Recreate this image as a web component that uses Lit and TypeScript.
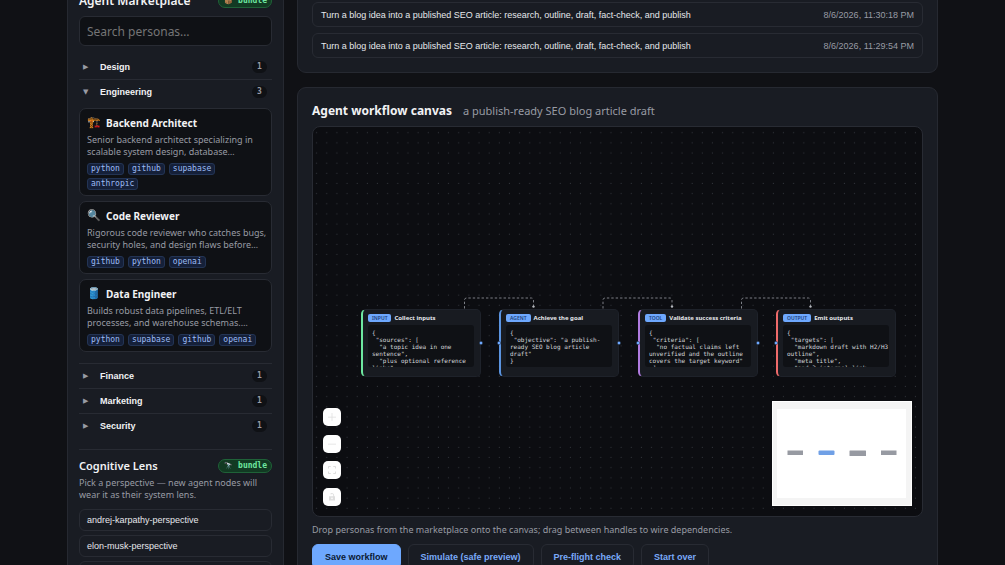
import { LitElement, html, css, svg, nothing } from "lit";
import { customElement, property, state } from "lit/decorators.js";
import { classMap } from "lit/directives/class-map.js";
import { styleMap } from "lit/directives/style-map.js";

interface Persona {
  icon: string;
  name: string;
  summary: string;
  tools: string[];
}

interface Group {
  name: string;
  count: number;
  personas: Persona[];
}

interface FlowNode {
  kind: "input" | "agent" | "tool" | "output";
  title: string;
  body: string;
  x: number;
  y: number;
}

const GROUPS: Group[] = [
  { name: "Design", count: 1, personas: [] },
  {
    name: "Engineering",
    count: 3,
    personas: [
      {
        icon: "🏗️",
        name: "Backend Architect",
        summary: "Senior backend architect specializing in scalable system design, database…",
        tools: ["python", "github", "supabase", "anthropic"],
      },
      {
        icon: "🔍",
        name: "Code Reviewer",
        summary: "Rigorous code reviewer who catches bugs, security holes, and design flaws before…",
        tools: ["github", "python", "openai"],
      },
      {
        icon: "🛢️",
        name: "Data Engineer",
        summary: "Builds robust data pipelines, ETL/ELT processes, and warehouse schemas.…",
        tools: ["python", "supabase", "github", "openai"],
      },
    ],
  },
  { name: "Finance", count: 1, personas: [] },
  { name: "Marketing", count: 1, personas: [] },
  { name: "Security", count: 1, personas: [] },
];

const LENSES = ["andrej-karpathy-perspective", "elon-musk-perspective", "feynman-perspective"];

const GOAL = "Turn a blog idea into a published SEO article: research, outline, draft, fact-check, and publish";
const RUNS = [
  { goal: GOAL, time: "8/6/2026, 11:30:18 PM" },
  { goal: GOAL, time: "8/6/2026, 11:29:54 PM" },
];

const NODES: FlowNode[] = [
  {
    kind: "input",
    title: "Collect inputs",
    body: '{\n "sources": [\n  "a topic idea in one sentence",\n  "plus optional reference links"\n ]\n}',
    x: 48,
    y: 182,
  },
  {
    kind: "agent",
    title: "Achieve the goal",
    body: '{\n "objective": "a publish-ready SEO blog article draft"\n}',
    x: 186,
    y: 182,
  },
  {
    kind: "tool",
    title: "Validate success criteria",
    body: '{\n "criteria": [\n  "no factual claims left unverified and the outline covers the target keyword"\n ]\n}',
    x: 325,
    y: 182,
  },
  {
    kind: "output",
    title: "Emit outputs",
    body: '{\n "targets": [\n  "markdown draft with H2/H3 outline",\n  "meta title",\n  "and 3 internal link suggestions"\n ]\n}',
    x: 463,
    y: 182,
  },
];

@customElement("persona-card")
export class PersonaCard extends LitElement {
  @property({ attribute: false }) persona!: Persona;

  static styles = css`
    :host {
      display: block;
    }
    .card {
      padding: 6px 2px 5px 7px;
      border: 1px solid #282b33;
      border-radius: 7px;
      background: #0f1115;
    }
    .head {
      display: flex;
      align-items: center;
      gap: 6px;
      height: 15px;
      margin: 0 0 4px;
      font-size: 10px;
      font-weight: 700;
      color: #f1f2f4;
    }
    .icon {
      width: 13px;
      font-family: "Noto Color Emoji", "Noto Sans", sans-serif;
      font-size: 11px;
      font-weight: 400;
      line-height: 15px;
    }
    .summary {
      margin: 0 0 5px;
      font-size: 9px;
      line-height: 12px;
      color: #989ba4;
    }
    .tools {
      display: flex;
      flex-wrap: wrap;
      gap: 3px 4px;
      margin: 0;
      padding: 0;
      list-style: none;
    }
    .tool {
      padding: 0 3px;
      border: 1px solid #233454;
      border-radius: 3px;
      background: #152039;
      font-family: "DejaVu Sans Mono", monospace;
      font-size: 8px;
      line-height: 10px;
      color: #9dbcf5;
    }
  `;

  render() {
    const p = this.persona;
    return html`
      <article class="card">
        <h3 class="head"><span class="icon">${p.icon}</span>${p.name}</h3>
        <p class="summary">${p.summary}</p>
        <ul class="tools">
          ${p.tools.map((t) => html`<li class="tool">${t}</li>`)}
        </ul>
      </article>
    `;
  }
}

@customElement("workflow-canvas")
export class WorkflowCanvas extends LitElement {
  static styles = css`
    :host {
      display: block;
    }
    .canvas {
      position: relative;
      height: 389px;
      border: 1px solid #282b33;
      border-radius: 8px;
      background: #0c0d11;
      overflow: hidden;
    }
    .backdrop {
      display: block;
      width: 100%;
      height: 100%;
    }
    .node {
      position: absolute;
      box-sizing: border-box;
      width: 120px;
      height: 68px;
      padding: 4px 6px 0 5px;
      border: 1px solid #1e222a;
      border-left: 2px solid #6ea8fe;
      border-radius: 5px;
      background: #181b21;
      color: #e6e8ec;
    }
    .node.input {
      border-left-color: #6ee7a0;
    }
    .node.agent {
      border-left-color: #5b94e0;
    }
    .node.tool {
      border-left-color: #b07be0;
    }
    .node.output {
      border-left-color: #ee6a6a;
    }
    .title {
      display: flex;
      align-items: center;
      gap: 3px;
      margin: 0 0 3px;
      font-size: 6px;
      line-height: 8px;
      font-weight: 700;
      white-space: nowrap;
    }
    .kind {
      padding: 0 4px;
      border-radius: 2px;
      background: #6ea8fe;
      color: #1d3f78;
      font-size: 5px;
      font-weight: 600;
    }
    .body {
      box-sizing: border-box;
      height: 42px;
      margin: 0;
      padding: 4px 0 0 4px;
      border-radius: 3px;
      background: #0f1115;
      overflow: hidden;
      font-family: "DejaVu Sans Mono", monospace;
      font-size: 6px;
      line-height: 7px;
      color: #d5d7db;
      white-space: pre-wrap;
    }
    .handles {
      position: absolute;
      left: 0;
      top: 212px;
    }
    .controls {
      position: absolute;
      left: 10px;
      bottom: 10px;
      display: flex;
      flex-direction: column;
      justify-content: space-between;
      height: 98px;
    }
    .control {
      display: grid;
      place-items: center;
      width: 18px;
      height: 18px;
      padding: 0;
      border: 0;
      border-radius: 5px;
      background: #fefefe;
    }
    .control svg {
      width: 8px;
      height: 8px;
      fill: #dedede;
    }
    .minimap {
      position: absolute;
      right: 10px;
      bottom: 10px;
      width: 140px;
      height: 105px;
      background: #fff;
    }
  `;

  private edge(x: number) {
    return svg`
      <path d="M${x} 181.5V173a2 2 0 0 1 2-2h65a2 2 0 0 1 2 2v7" fill="none"
        stroke="#7c7f86" stroke-width="1" stroke-dasharray="2.4 2"></path>
      <circle cx=${x + 69} cy="179.6" r="1.2" fill="#b5b8be"></circle>
    `;
  }

  render() {
    return html`
      <div class="canvas">
        <svg class="backdrop" aria-hidden="true">
          <defs>
            <pattern id="dots" x="-1.4" y="0.7" width="10.15" height="10.15" patternUnits="userSpaceOnUse">
              <circle cx="5" cy="5" r="0.55" fill="#33363d"></circle>
            </pattern>
          </defs>
          <rect width="100%" height="100%" fill="url(#dots)"></rect>
          ${[151.5, 290, 428.5].map((x) => this.edge(x))}
        </svg>
        ${NODES.map(
          (n) => html`
            <section
              class=${classMap({ node: true, [n.kind]: true })}
              style=${styleMap({ left: `${n.x}px`, top: `${n.y}px` })}
            >
              <h3 class="title"><span class="kind">${n.kind.toUpperCase()}</span>${n.title}</h3>
              <pre class="body">${n.body}</pre>
            </section>
          `,
        )}
        <svg class="handles" aria-hidden="true" width="560" height="8">
          ${[168, 186, 306, 325, 445, 463].map(
            (x) => svg`<circle cx=${x} cy="4" r="1.7" fill="#6ea8fe" stroke="#0f1115" stroke-width="0.4"></circle>`,
          )}
        </svg>
        <div class="controls">
          <button class="control" aria-label="Zoom in">
            <svg viewBox="0 0 32 32"><path d="M14.500 0h3v14.500H32v3H17.500V32h-3V17.500H0v-3h14.500z"></path></svg>
          </button>
          <button class="control" aria-label="Zoom out">
            <svg viewBox="0 0 32 32"><path d="M0 14.500h32v3H0z"></path></svg>
          </button>
          <button class="control" aria-label="Fit view">
            <svg viewBox="0 0 32 32">
              <path d="M0 10V3a3 3 0 0 1 3-3h8v4H4v6zM21 0h8a3 3 0 0 1 3 3v7h-4V4h-7zM0 22h4v6h7v4H3a3 3 0 0 1-3-3zM28 22h4v7a3 3 0 0 1-3 3h-8v-4h7z"></path>
            </svg>
          </button>
          <button class="control" aria-label="Toggle interactivity">
            <svg viewBox="0 0 32 32">
              <path fill-rule="evenodd" d="M4 13h17V9a5 5 0 0 0-9-3L9 4a8.500 8.500 0 0 1 15.500 5v4H28v17H4zM16 18a3 3 0 1 0 .01 0z"></path>
            </svg>
          </button>
        </div>
        <svg class="minimap" viewBox="0 0 140 105" role="img" aria-label="Mini map">
          <rect x="1" y="1" width="138" height="103" fill="#f4f4f4"></rect>
          <rect x="5" y="8" width="129" height="89" fill="#fff"></rect>
          <rect x="15.500" y="49.500" width="15.500" height="4.500" fill="#979aa2"></rect>
          <rect x="46.500" y="49.500" width="16" height="4.500" rx="1" fill="#70a0e6"></rect>
          <rect x="77.500" y="49.500" width="16.500" height="5.500" rx="0.5" fill="#979aa2"></rect>
          <rect x="109" y="49.500" width="15.500" height="4.500" fill="#979aa2"></rect>
        </svg>
      </div>
    `;
  }
}

@customElement("app-root")
export class AppRoot extends LitElement {
  @state() private open = new Set(["Engineering"]);

  static styles = css`
    :host {
      display: block;
      height: 100vh;
      overflow: hidden;
      background: #101115;
      color: #e6e8ec;
      font-family: "Noto Sans", sans-serif;
    }
    .shell {
      display: grid;
      grid-template-columns: 217px minmax(0, 1fr);
      gap: 13px;
      margin: -25px 67px 0;
    }
    .sidebar {
      padding: 16px 11px;
      border: 1px solid #262931;
      border-radius: 9px;
      background: #191c23;
    }
    .section-head {
      display: flex;
      align-items: center;
      justify-content: space-between;
      height: 17px;
    }
    .section-title {
      margin: 0;
      font-size: 12px;
      line-height: 17px;
      font-weight: 600;
      color: #f1f2f4;
    }
    .lens .section-title {
      font-size: 11px;
    }
    .bundle {
      display: flex;
      align-items: center;
      gap: 5px;
      height: 12px;
      padding: 0 4px 0 5px;
      border: 1px solid #1f6238;
      border-radius: 8px;
      background: #123a23;
      font-family: "DejaVu Sans Mono", monospace;
      font-size: 8px;
      font-weight: 700;
      color: #6ee7a0;
    }
    .bundle-icon {
      font-family: "Noto Color Emoji", sans-serif;
      font-size: 7px;
      font-weight: 400;
    }
    .search {
      box-sizing: border-box;
      display: block;
      width: 100%;
      height: 30px;
      margin: 7px 0 9px;
      padding: 0 7px;
      border: 1px solid #282b33;
      border-radius: 6px;
      background: #0f1115;
      color: #e6e8ec;
      font-family: inherit;
      font-size: 12px;
    }
    .search::placeholder {
      color: #757575;
    }
    .group + .group {
      border-top: 1px solid #282b33;
    }
    .group-toggle {
      display: flex;
      align-items: center;
      width: 100%;
      height: 24px;
      padding: 0 5px 0 4px;
      border: 0;
      background: none;
      color: #f1f2f4;
      font-family: "Liberation Sans", sans-serif;
      font-size: 9px;
      font-weight: 700;
      text-align: left;
    }
    .caret {
      width: 17px;
      font-family: "DejaVu Sans", sans-serif;
      font-size: 7px;
      font-weight: 400;
      color: #989ba4;
    }
    .group-name {
      flex: 1;
    }
    .count {
      width: 15px;
      border-radius: 6px;
      background: #0f1115;
      font-family: "DejaVu Sans Mono", monospace;
      font-size: 8px;
      line-height: 12px;
      color: #989ba4;
      text-align: center;
    }
    .personas {
      display: grid;
      gap: 5px;
      padding: 4px 0 11px;
    }
    .lens {
      margin-top: 11px;
      padding-top: 7px;
      border-top: 1px solid #282b33;
    }
    .hint {
      margin: 0;
      font-size: 9px;
      line-height: 12px;
      color: #989ba4;
    }
    .lens .hint {
      margin: 3px 0 8px;
    }
    .lens-list {
      display: grid;
      gap: 4px;
    }
    .lens-item {
      height: 22px;
      padding: 0 7px;
      border: 1px solid #282b33;
      border-radius: 6px;
      background: #191c23;
      color: #e6e8ec;
      font-family: "Liberation Sans", sans-serif;
      font-size: 9px;
      text-align: left;
    }
    .main {
      display: flex;
      flex-direction: column;
      gap: 14px;
    }
    .panel {
      padding: 14px;
      border: 1px solid #262931;
      border-radius: 9px;
      background: #191c23;
    }
    .history {
      display: grid;
      gap: 6px;
      padding-top: 26px;
    }
    .run {
      display: flex;
      align-items: center;
      justify-content: space-between;
      height: 25px;
      padding: 0 8px;
      border: 1px solid #282b33;
      border-radius: 6px;
      background: #191c23;
      color: #e6e8ec;
      font-family: "Liberation Sans", sans-serif;
      font-size: 9px;
    }
    .run-time {
      color: #989ba4;
    }
    .canvas-head {
      display: flex;
      align-items: baseline;
      gap: 11px;
      margin-bottom: 7px;
    }
    .canvas-title {
      margin: 0;
      font-size: 12px;
      line-height: 17px;
      font-weight: 700;
      color: #f1f2f4;
    }
    .canvas-goal {
      font-size: 11px;
      line-height: 17px;
      color: #989ba4;
    }
    .panel .hint {
      margin: 7px 0 8px;
    }
    .actions {
      display: flex;
      gap: 7px;
    }
    .action {
      height: 25px;
      padding: 0 12px;
      border: 1px solid #282b33;
      border-radius: 6px;
      background: #191c23;
      color: #7aaaf8;
      font-family: "Liberation Sans", sans-serif;
      font-size: 9px;
      font-weight: 700;
    }
    .action.primary {
      border-color: #6ea8fe;
      background: #6ea8fe;
      color: #0b1a33;
    }
  `;

  private toggle(name: string) {
    const next = new Set(this.open);
    if (!next.delete(name)) next.add(name);
    this.open = next;
  }

  private renderGroup(g: Group) {
    const open = this.open.has(g.name);
    return html`
      <div class="group">
        <button class="group-toggle" aria-expanded=${open} @click=${() => this.toggle(g.name)}>
          <span class="caret">${open ? "▼" : "▶"}</span>
          <span class="group-name">${g.name}</span>
          <span class="count">${g.count}</span>
        </button>
        ${open && g.personas.length
          ? html`<div class="personas">
              ${g.personas.map((p) => html`<persona-card .persona=${p}></persona-card>`)}
            </div>`
          : nothing}
      </div>
    `;
  }

  render() {
    return html`
      <div class="shell">
        <aside class="sidebar">
          <div class="section-head">
            <h2 class="section-title">Agent Marketplace</h2>
            <span class="bundle"><span class="bundle-icon">📦</span>bundle</span>
          </div>
          <input class="search" type="search" placeholder="Search personas…" aria-label="Search personas" />
          ${GROUPS.map((g) => this.renderGroup(g))}
          <section class="lens">
            <div class="section-head">
              <h2 class="section-title">Cognitive Lens</h2>
              <span class="bundle"><span class="bundle-icon">🔭</span>bundle</span>
            </div>
            <p class="hint">Pick a perspective — new agent nodes will wear it as their system lens.</p>
            <div class="lens-list">
              ${LENSES.map((l) => html`<button class="lens-item">${l}</button>`)}
            </div>
          </section>
        </aside>
        <main class="main">
          <section class="panel history">
            ${RUNS.map(
              (r) => html`<button class="run"><span>${r.goal}</span><span class="run-time">${r.time}</span></button>`,
            )}
          </section>
          <section class="panel">
            <div class="canvas-head">
              <h2 class="canvas-title">Agent workflow canvas</h2>
              <span class="canvas-goal">a publish-ready SEO blog article draft</span>
            </div>
            <workflow-canvas></workflow-canvas>
            <p class="hint">
              Drop personas from the marketplace onto the canvas; drag between handles to wire dependencies.
            </p>
            <div class="actions">
              <button class="action primary">Save workflow</button>
              <button class="action">Simulate (safe preview)</button>
              <button class="action">Pre-flight check</button>
              <button class="action">Start over</button>
            </div>
          </section>
        </main>
      </div>
    `;
  }
}
